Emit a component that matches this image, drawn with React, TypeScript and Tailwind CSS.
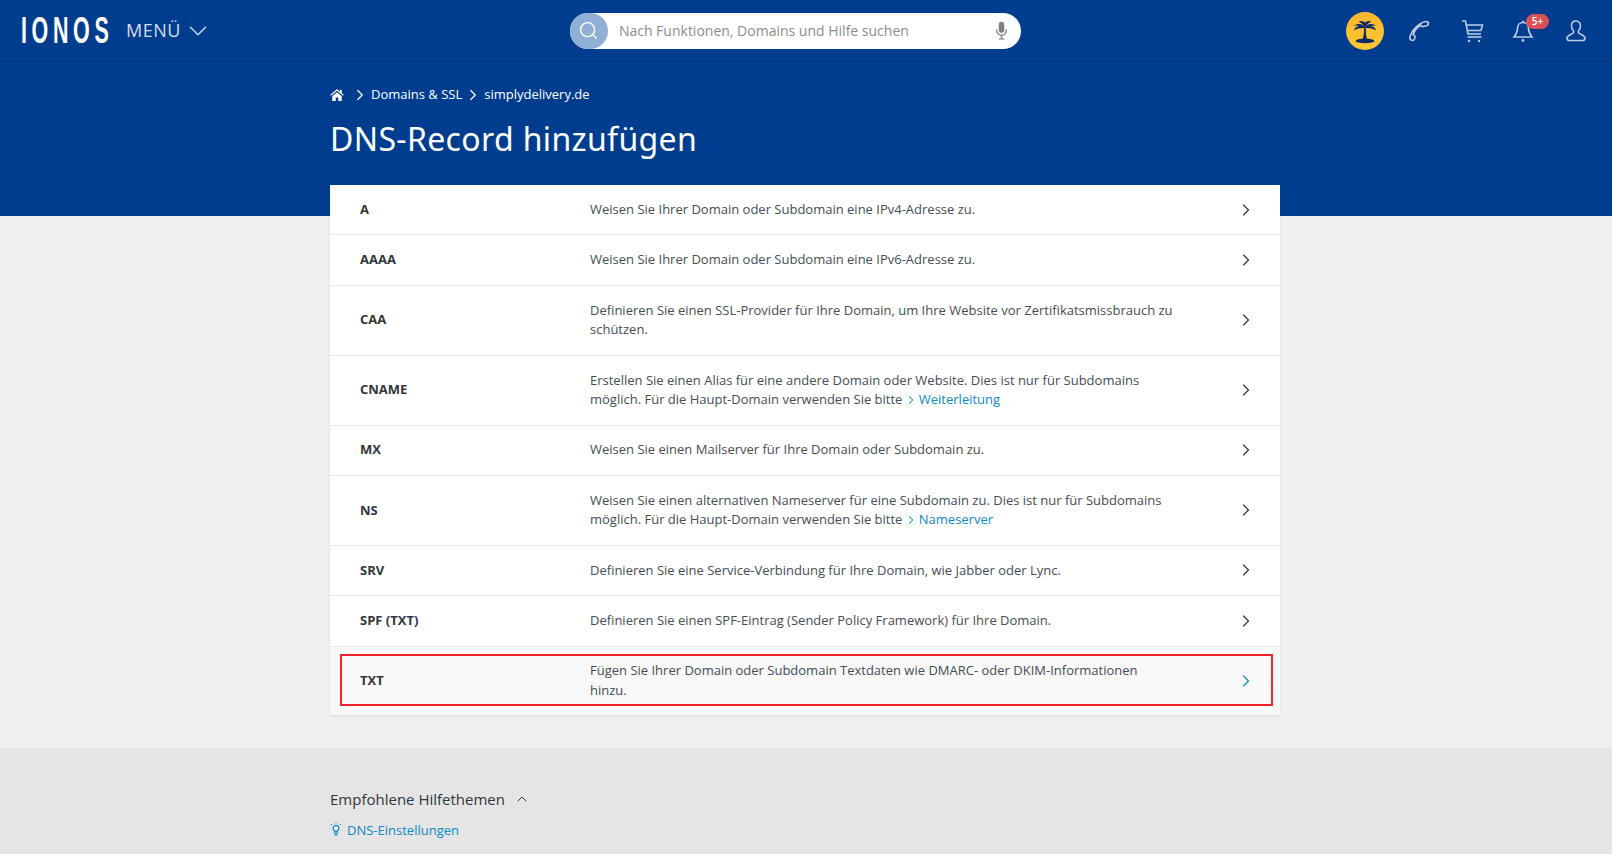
import { ChevronDown, ChevronRight, ChevronUp, Search } from "lucide-react"
import type { ReactNode } from "react"

type DnsRow = {
    name: string
    text: ReactNode
}

function InlineLink({ label }: { label: string }) {
    return (
        <span className="text-[#0a8ac6]">
            <ChevronRight className="-ml-[2px] mr-[1px] inline h-[14px] w-[14px] align-[-3px]" strokeWidth={1.8} />
            {label}
        </span>
    )
}

const rows: DnsRow[] = [
    { name: "A", text: "Weisen Sie Ihrer Domain oder Subdomain eine IPv4-Adresse zu." },
    { name: "AAAA", text: "Weisen Sie Ihrer Domain oder Subdomain eine IPv6-Adresse zu." },
    {
        name: "CAA",
        text: "Definieren Sie einen SSL-Provider für Ihre Domain, um Ihre Website vor Zertifikatsmissbrauch zu schützen.",
    },
    {
        name: "CNAME",
        text: (
            <>
                Erstellen Sie einen Alias für eine andere Domain oder Website. Dies ist nur für Subdomains möglich. Für
                die Haupt-Domain verwenden Sie bitte <InlineLink label="Weiterleitung" />
            </>
        ),
    },
    { name: "MX", text: "Weisen Sie einen Mailserver für Ihre Domain oder Subdomain zu." },
    {
        name: "NS",
        text: (
            <>
                Weisen Sie einen alternativen Nameserver für eine Subdomain zu. Dies ist nur für Subdomains möglich. Für
                die Haupt-Domain verwenden Sie bitte <InlineLink label="Nameserver" />
            </>
        ),
    },
    { name: "SRV", text: "Definieren Sie eine Service-Verbindung für Ihre Domain, wie Jabber oder Lync." },
    { name: "SPF (TXT)", text: "Definieren Sie einen SPF-Eintrag (Sender Policy Framework) für Ihre Domain." },
]

function PalmIcon() {
    return (
        <svg viewBox="0 0 24 24" className="h-[28px] w-[28px]" fill="#0b2a66">
            <path d="M11 9c.3 3.500 0 6.500-1 10h3.600c-.7-3.500-1-6.500-1-10z" />
            <path d="M12 8.500C10 5.500 6 5.200 2 7.500c2.500-.4 4-.2 5 .5-2 .2-3.800 1.200-4.500 3.500C5 9.800 8 9 12 9.500z" />
            <path d="M12 8.500c2-3 6-3.300 10-1-2.500-.4-4-.2-5 .5 2 .2 3.800 1.200 4.500 3.500-2.500-1.700-5.500-2.500-9.500-2z" />
            <path d="M11.800 8.500C10.500 6.500 9 4.500 6.500 3.800c2.500-.8 4.500-.2 5.500 1.200 1-1.400 3-2 5.500-1.200-2.500.7-4 2.700-5.200 4.700z" />
            <ellipse cx="12" cy="20.500" rx="8" ry="2" />
        </svg>
    )
}

function PhoneIcon() {
    return (
        <svg viewBox="0 0 24 24" className="h-[24px] w-[24px]" fill="none" stroke="#bccbe3" strokeWidth="1.6">
            <path d="M21.500 3.500c-1.500-1.500-5-1-8.500 1.500C8.500 8.200 4.500 13 3.200 17c-.7 2.200 0 3.800 1.500 4.300 1.200.4 2.300-.2 2.800-1.300l.5-1.800c.2-.8-.2-1.500-.9-1.900l-.9-.5c.8-3.500 4.200-8 7.600-9.500l.7.800c.6.600 1.400.7 2.100.3l3.700-1c1.100-.6 1.400-1.600.7-2.400z" />
        </svg>
    )
}

function CartIcon() {
    return (
        <svg viewBox="0 0 24 24" className="h-[24px] w-[24px]" fill="none" stroke="#bccbe3" strokeWidth="1.6">
            <path d="M2 2h3.500l2.500 13h13" />
            <path d="M6 6h16.500l-1.500 5.500H7" />
            <path d="M7.500 18h14" />
            <circle cx="9" cy="22" r="1.200" fill="#bccbe3" stroke="none" />
            <circle cx="19" cy="22" r="1.200" fill="#bccbe3" stroke="none" />
        </svg>
    )
}

function BellIcon() {
    return (
        <svg viewBox="0 0 24 24" className="h-[24px] w-[24px]" fill="none" stroke="#bccbe3" strokeWidth="1.6">
            <path d="M12 3.500c-3.500 0-5.500 2.600-5.500 6 0 4-1.500 6-3.500 8.500h18c-2-2.500-3.500-4.500-3.500-8.500 0-3.400-2-6-5.500-6z" />
            <path d="M12 1.500v2" />
            <circle cx="12" cy="21.500" r="1.400" fill="#bccbe3" stroke="none" />
        </svg>
    )
}

function UserIcon() {
    return (
        <svg viewBox="0 0 24 24" className="h-[24px] w-[24px]" fill="none" stroke="#bccbe3" strokeWidth="1.6">
            <path d="M12 2c-3 0-4.500 2.300-4.500 5 0 2 .8 3.800 2 5 .4.500.3 1.600-.5 2.200C7 15.500 3.500 16.200 3 19c-.2 1.500.8 2.500 2.500 2.500h13c1.700 0 2.700-1 2.500-2.500-.5-2.800-4-3.500-6-4.800-.8-.6-.9-1.700-.5-2.200 1.200-1.200 2-3 2-5 0-2.700-1.500-5-4.500-5z" />
        </svg>
    )
}

function MicIcon() {
    return (
        <svg viewBox="0 0 16 24" className="h-[19px] w-[13px]" fill="none" stroke="#808080" strokeWidth="1.6">
            <rect x="4.500" y="1" width="7" height="14" rx="3.500" fill="#808080" stroke="none" />
            <path d="M2 10.500v1.500c0 3.300 2.700 6 6 6s6-2.700 6-6v-1.500M8 18v4M4.500 22.500h7" />
        </svg>
    )
}

function HomeIcon() {
    return (
        <svg viewBox="0 0 16 14" className="h-[12px] w-[14px]" fill="white">
            <path d="M8 0 0 7l1 1 7-6 7 6 1-1-2.500-2.200V1h-2v2z" />
            <path d="M2.500 8.500 8 3.800l5.500 4.700V14H9.500V10h-3v4h-4z" />
        </svg>
    )
}

function BulbIcon() {
    return (
        <svg viewBox="0 0 14 18" className="h-[15px] w-[12px]" fill="none" stroke="#0a8ac6" strokeWidth="1.300">
            <circle cx="7" cy="7.500" r="3.500" />
            <path d="M5.500 11v3h3v-3M6 16h2" />
            <path d="M1 2.500l1 1M13 2.500l-1 1M7 0.500v1.200" />
        </svg>
    )
}

export default function App() {
    return (
        <div className="flex h-screen flex-col overflow-hidden bg-[#efefef] font-['Open_Sans',sans-serif] text-[13px] text-[#474c52]">
            <div className="bg-[#003d8f]">
                <header className="flex h-[62px] items-center border-b border-[#03336f] pl-[21px] pr-[24px]">
                    <span className="w-[90px] origin-left scale-x-[0.58] whitespace-nowrap font-['Liberation_Sans',sans-serif] text-[37px] font-bold leading-none tracking-[8px] text-white">
                        IONOS
                    </span>
                    <span className="ml-[15px] text-[18px] tracking-[0.5px] text-[#d5deec]">MENÜ</span>
                    <ChevronDown className="ml-[2px] h-[30px] w-[30px] text-[#c4d0e4]" strokeWidth={1.3} />
                    <div className="ml-[357px] flex h-[36px] w-[451px] items-center rounded-full bg-white">
                        <div className="flex h-[36px] w-[38px] shrink-0 items-center justify-center rounded-full bg-[#8fb0d4]">
                            <Search className="h-[21px] w-[21px] text-white" strokeWidth={1.6} />
                        </div>
                        <span className="ml-[11px] text-[14px] text-[#8c8c8c]">Nach Funktionen, Domains und Hilfe suchen</span>
                        <div className="ml-auto mr-[13px] flex"><MicIcon /></div>
                    </div>
                    <div className="ml-auto flex items-center">
                        <div className="flex h-[38px] w-[38px] items-center justify-center rounded-full bg-gradient-to-b from-[#fdb52e] to-[#fdc832]">
                            <PalmIcon />
                        </div>
                        <div className="ml-[23px]"><PhoneIcon /></div>
                        <div className="ml-[29px]"><CartIcon /></div>
                        <div className="relative ml-[27px]">
                            <BellIcon />
                            <span className="absolute -right-[14px] -top-[5px] flex h-[15px] w-[23px] items-center justify-center rounded-full bg-[#db4f56] text-[10px] font-semibold text-white">
                                5+
                            </span>
                        </div>
                        <div className="ml-[29px]"><UserIcon /></div>
                    </div>
                </header>
                <div className="ml-[330px] h-[154px] pt-[23px]">
                    <nav className="flex h-[20px] items-center text-[13px] font-medium text-white">
                        <HomeIcon />
                        <ChevronRight className="ml-[7px] mr-[2px] h-[18px] w-[18px]" strokeWidth={1.6} />
                        <span>Domains &amp; SSL</span>
                        <ChevronRight className="mx-[2px] h-[18px] w-[18px]" strokeWidth={1.6} />
                        <span>simplydelivery.de</span>
                    </nav>
                    <h1 className="mt-[12px] font-['Noto_Sans',sans-serif] text-[32px] leading-[44px] tracking-[0.35px] text-white">
                        DNS-Record hinzufügen
                    </h1>
                </div>
            </div>

            <main className="ml-[330px] -mt-[31px] w-[950px] shrink-0 bg-white shadow-[0_1px_2px_rgba(0,0,0,0.08)]">
                {rows.map((row) => (
                    <div key={row.name} className="flex items-center border-b border-[#e9e9e9] py-[14.95px] leading-[19.5px]">
                        <div className="ml-[30px] w-[230px] shrink-0 font-bold text-[#30363d]">{row.name}</div>
                        <div className="w-[586px] shrink-0">{row.text}</div>
                        <ChevronRight className="-my-[2px] ml-[60px] h-[20px] w-[20px] text-[#30363d]" strokeWidth={1.4} />
                    </div>
                ))}
                <div className="relative flex items-center bg-[#f8f8f8] py-[14.5px] leading-[19.5px]">
                    <div className="ml-[30px] w-[230px] shrink-0 font-bold text-[#30363d]">TXT</div>
                    <div className="w-[586px] shrink-0">
                        Fügen Sie Ihrer Domain oder Subdomain Textdaten wie DMARC- oder DKIM-Informationen hinzu.
                    </div>
                    <ChevronRight className="-my-[2px] ml-[60px] h-[20px] w-[20px] text-[#0a8ac6]" strokeWidth={1.4} />
                    <div className="absolute bottom-[9px] left-[10px] right-[7px] top-[7px] border-2 border-[#f5222d]" />
                </div>
            </main>

            <footer className="mt-[33px] flex-1 bg-[#e5e5e5] pl-[330px] pt-[39px]">
                <div className="flex items-center text-[15px] leading-[24px] text-[#30363d]">
                    Empfohlene Hilfethemen
                    <ChevronUp className="ml-[9px] h-[16px] w-[16px]" strokeWidth={1.5} />
                </div>
                <div className="mt-[8px] flex items-center text-[13px] leading-[22px] text-[#0a8ac6]">
                    <BulbIcon />
                    <span className="ml-[5px]">DNS-Einstellungen</span>
                </div>
            </footer>
        </div>
    )
}
